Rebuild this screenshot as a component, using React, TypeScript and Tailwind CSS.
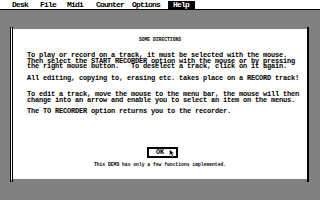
export default function App() {
  const lines = [
    "To play or record on a track, it must be selected with the mouse.",
    "Then select the START RECORDER option with the mouse or by pressing",
    "the right mouse button.   To deselect a track, click on it again.",
    "",
    "All editing, copying to, erasing etc. takes place on a RECORD track!",
    "",
    "",
    "To edit a track, move the mouse to the menu bar, the mouse will then",
    "change into an arrow and enable you to select an item on the menus.",
    "",
    "The TO RECORDER option returns you to the recorder.",
  ];
  return (
    <div className="w-[320px] h-[200px] bg-[#808080] overflow-hidden font-['Liberation_Mono',monospace] text-black">
      <div className="h-[10px] bg-white border-b border-black flex items-start pl-[12px] text-[8px] leading-[8px] font-bold tracking-[-0.8px] whitespace-pre">
        <span className="mt-[1px]">Desk</span>
        <span className="mt-[1px] ml-[12px]">File</span>
        <span className="mt-[1px] ml-[11px]">Midi</span>
        <span className="mt-[1px] ml-[13px]">Counter</span>
        <span className="mt-[1px] ml-[8px]">Options</span>
        <span className="mt-[1px] ml-[8px] h-[8px] bg-black text-white pl-[5px] pr-[6px]">Help</span>
      </div>
      <div className="pl-[10px] pt-[17px] flex items-start">
        <div className="w-px h-[155px] bg-black" />
        <div className="w-px h-[152px] mt-[1px] bg-white" />
        <div className="w-px h-[155px] bg-black" />
        <div className="w-[294px] h-[150px] mt-[2px] bg-white flex flex-col">
          <div className="mt-[9px] h-[4px] leading-[4px] text-[4.7px] font-bold text-center whitespace-pre">SOME DIRECTIONS</div>
          <div className="mt-[11.2px] pl-[14px] text-[7px] leading-[5.6px] font-bold tracking-[-0.2px] whitespace-pre">
            {lines.map((l, i) => (
              <div key={i} className="h-[5.6px]">{l}</div>
            ))}
          </div>
          <div className="mt-[32.2px] ml-[134px] w-[31px] h-[11px] border-2 border-black relative flex items-center pl-[7px] text-[7px] leading-[6px] font-bold tracking-[-0.2px]">
            <span>OK</span>
            <svg className="absolute left-[20px] top-[0px]" width="6" height="8" viewBox="0 0 6 8">
              <path d="M0.5 0.5 L0.5 6.5 L2 5 L3.3 7.6 L4.4 7 L3.2 4.6 L5.4 4.6 Z" fill="black" stroke="white" strokeWidth="0.5" />
            </svg>
          </div>
          <div className="mt-[5px] h-[4px] leading-[4px] text-[4.7px] font-bold text-center whitespace-pre">This DEMO has only a few functions implemented.</div>
        </div>
        <div className="w-[2px] h-[155px] bg-black" />
      </div>
    </div>
  );
}
